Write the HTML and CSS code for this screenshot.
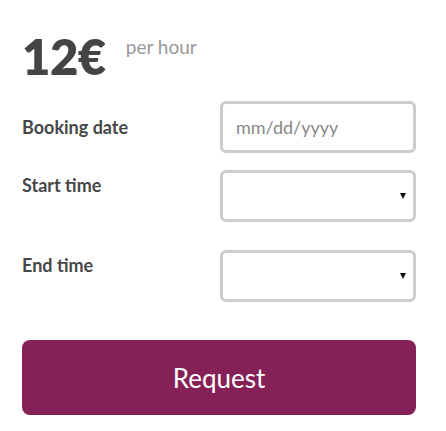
FILE: index.html
```html
<!DOCTYPE html>
<html lang="en">
<head>
    <meta charset="UTF-8">
    <meta name="viewport" content="width=device-width, initial-scale=1.0">
    <title>Booking</title>
    <link rel="stylesheet" href="styles.css">
</head>
<body>
    <div class="booking">
        <div class="price">
            <span class="amount">12€</span>
            <span class="unit">per hour</span>
        </div>

        <form class="booking-form">
            <div class="row row-date">
                <label for="date">Booking date</label>
                <input id="date" type="text" placeholder="mm/dd/yyyy">
            </div>
            <div class="row row-start">
                <label for="start">Start time</label>
                <span class="select-wrap">
                    <select id="start"><option></option></select>
                </span>
            </div>
            <div class="row row-end">
                <label for="end">End time</label>
                <span class="select-wrap">
                    <select id="end"><option></option></select>
                </span>
            </div>
            <button type="button" class="request">Request</button>
        </form>
    </div>
</body>
</html>
```

FILE: styles.css
```css
body {
    margin: 0;
    background-color: #fff;
    font-family: 'Lato', 'Noto Sans', sans-serif;
    color: #444;
}

.booking {
    padding: 30px 30px 0 22px;
}

.price {
    display: flex;
    align-items: flex-start;
    gap: 20px;
    height: 62px;
}

.amount {
    font-size: 49px;
    font-weight: 800;
    line-height: 1;
    color: #444;
    letter-spacing: -0.5px;
    margin-top: 2px;
}

.unit {
    font-size: 19px;
    color: #999;
    margin-top: 5px;
}

.booking-form {
    display: flex;
    flex-direction: column;
    margin-top: 9px;
}

.row {
    display: flex;
    justify-content: space-between;
    align-items: flex-start;
}

.row label {
    font-size: 18px;
    font-weight: 700;
    color: #474747;
}

.row-date {
    align-items: center;
}

.row-start {
    margin-top: 17px;
}

.row-start label,
.row-end label {
    padding-top: 4px;
}

.row-end {
    margin-top: 28px;
}

input,
select {
    width: 196px;
    height: 52px;
    box-sizing: border-box;
    border: 3px solid #ccc;
    border-radius: 6px;
    background-color: #fff;
    font-family: inherit;
    font-size: 18px;
    color: #444;
    outline: none;
}

input {
    padding: 0 13px;
}

input::placeholder {
    color: #888;
}

.select-wrap {
    position: relative;
    display: block;
}

select {
    display: block;
    appearance: none;
    -webkit-appearance: none;
    padding: 0 13px;
}

.select-wrap::after {
    content: '';
    position: absolute;
    right: 10px;
    top: 23px;
    border-left: 3.5px solid transparent;
    border-right: 3.5px solid transparent;
    border-top: 6px solid #111;
    pointer-events: none;
}

.request {
    margin-top: 38px;
    width: 100%;
    height: 75px;
    border: none;
    border-radius: 8px;
    background-color: #862157;
    color: #fff;
    font-family: inherit;
    font-size: 26px;
    cursor: pointer;
}
```
